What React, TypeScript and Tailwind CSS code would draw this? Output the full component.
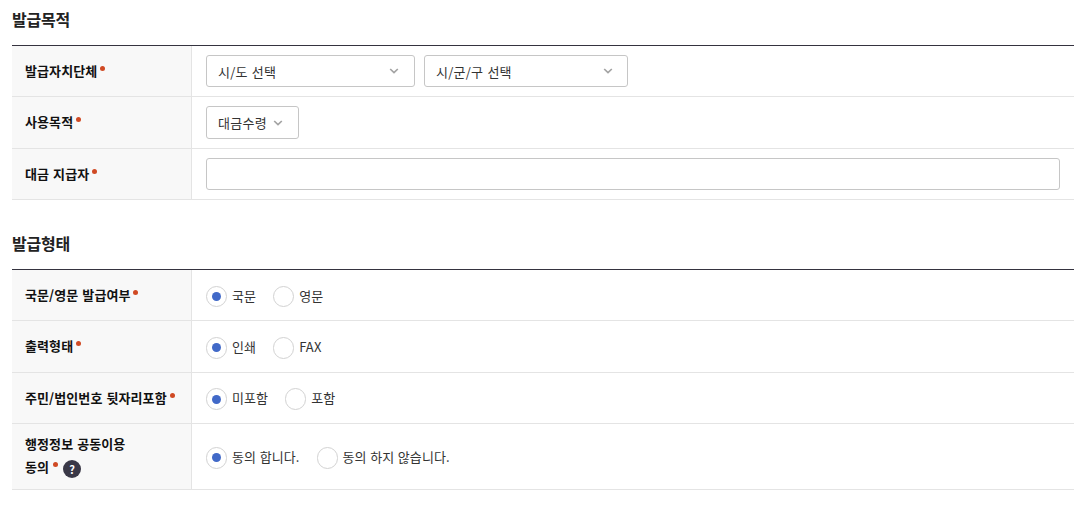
import React, { useState } from 'react';

const Dot = ({ className = '' }: { className?: string }) => (
  <span className={`inline-block size-[5px] shrink-0 rounded-full bg-[#d04a24] ${className}`} />
);

const Chevron = () => (
  <svg width="10" height="6" viewBox="0 0 10 6" fill="none" className="shrink-0">
    <path d="M1.2 1 L5 4.6 L8.8 1" stroke="#a3a3a3" strokeWidth="1.7" />
  </svg>
);

const SectionTitle = ({ children }: { children: React.ReactNode }) => (
  <h2 className="h-6 text-[16px] leading-6 font-bold tracking-[-0.2px] text-[#222]">{children}</h2>
);

interface RowProps {
  label: React.ReactNode;
  height: string;
  labelClass?: string;
  children: React.ReactNode;
}

const Row = ({ label, height, labelClass = '', children }: RowProps) => (
  <div className={`flex border-b border-[#e4e4e4] ${height}`}>
    <div
      className={`flex w-[180px] shrink-0 items-center border-r border-[#e4e4e4] bg-[#f8f8f8] pl-[13px] font-bold text-[#111] ${labelClass}`}
    >
      {label}
    </div>
    <div className="flex grow items-center pr-[14px] pl-[14px]">{children}</div>
  </div>
);

const SelectBox = ({ text, className }: { text: string; className: string }) => (
  <button
    type="button"
    className={`flex items-center justify-between rounded-[3px] border border-[#c6c6c6] bg-white pl-[11px] text-left tracking-[0.25px] text-[#333] [word-spacing:0.9px] ${className}`}
  >
    <span className="pt-px leading-5">{text}</span>
    <Chevron />
  </button>
);

interface RadioGroupProps {
  options: string[];
  circle?: string;
  className?: string;
}

const RadioGroup = ({ options, circle = 'h-[22px]', className = 'pt-[2px]' }: RadioGroupProps) => {
  const [selected, setSelected] = useState(0);

  return (
    <div className={`flex gap-[17px] ${className}`}>
      {options.map((option, i) => (
        <button
          key={option}
          type="button"
          onClick={() => setSelected(i)}
          className="flex items-start text-[#333] [word-spacing:0.5px]"
        >
          <span
            className={`mr-[5px] flex w-[21px] items-center justify-center rounded-full border border-[#d2d2d2] bg-white ${circle}`}
          >
            {selected === i && <span className="size-[9px] rounded-full bg-[#4169c8]" />}
          </span>
          <span className="leading-5">{option}</span>
        </button>
      ))}
    </div>
  );
};

const App: React.FC = () => {
  return (
    <div className="h-[505px] w-[1088px] bg-white pt-[7px] pr-[14px] pl-[12px] font-['Noto_Sans_CJK_KR',sans-serif] text-[13px] tracking-[0.1px] [word-spacing:0.9px]">
      <SectionTitle>발급목적</SectionTitle>
      <div className="mt-[14px] border-t border-[#35333f]">
        <Row height="h-[51px]" label={<>발급자치단체<Dot className="mb-[6px] ml-[3px]" /></>}>
          <SelectBox text="시/도 선택" className="mr-[9px] h-8 w-[209px] pr-[15px]" />
          <SelectBox text="시/군/구 선택" className="h-8 w-[204px] pr-[14px]" />
        </Row>
        <Row height="h-[52px]" labelClass="pb-px" label={<>사용목적<Dot className="mb-[5px] ml-[3px]" /></>}>
          <SelectBox text="대금수령" className="h-[33px] w-[93px] pr-[15px]" />
        </Row>
        <Row height="h-[51px]" label={<>대금 지급자<Dot className="mb-[6px] ml-[3px]" /></>}>
          <input type="text" className="h-8 w-full rounded-[3px] border border-[#c6c6c6] px-3 outline-none" />
        </Row>
      </div>

      <div className="mt-[31px]">
        <SectionTitle>발급형태</SectionTitle>
      </div>
      <div className="mt-[14px] border-t border-[#35333f]">
        <Row height="h-[51px]" label={<>국문/영문 발급여부<Dot className="mb-[6px] ml-[2px]" /></>}>
          <RadioGroup options={['국문', '영문']} circle="h-[21px]" />
        </Row>
        <Row height="h-[52px]" labelClass="pb-px" label={<>출력형태<Dot className="mb-[5px] ml-[3px]" /></>}>
          <RadioGroup options={['인쇄', 'FAX']} />
        </Row>
        <Row height="h-[51px]" label={<>주민/법인번호 뒷자리포함<Dot className="mb-[6px] ml-[3px]" /></>}>
          <RadioGroup options={['미포함', '포함']} />
        </Row>
        <Row
          height="h-[66px]"
          labelClass="pb-[3px]"
          label={
            <div className="leading-[23px]">
              <div>행정정보 공동이용</div>
              <div className="flex items-center">
                동의
                <Dot className="mb-[5px] ml-[4px]" />
                <span className="mt-[5px] ml-[5px] flex size-[18px] items-center justify-center rounded-full bg-[#3a3847] text-[11px] leading-none text-white">
                  ?
                </span>
              </div>
            </div>
          }
        >
          <RadioGroup options={['동의 합니다.', '동의 하지 않습니다.']} />
        </Row>
      </div>
    </div>
  );
};

export default App;
